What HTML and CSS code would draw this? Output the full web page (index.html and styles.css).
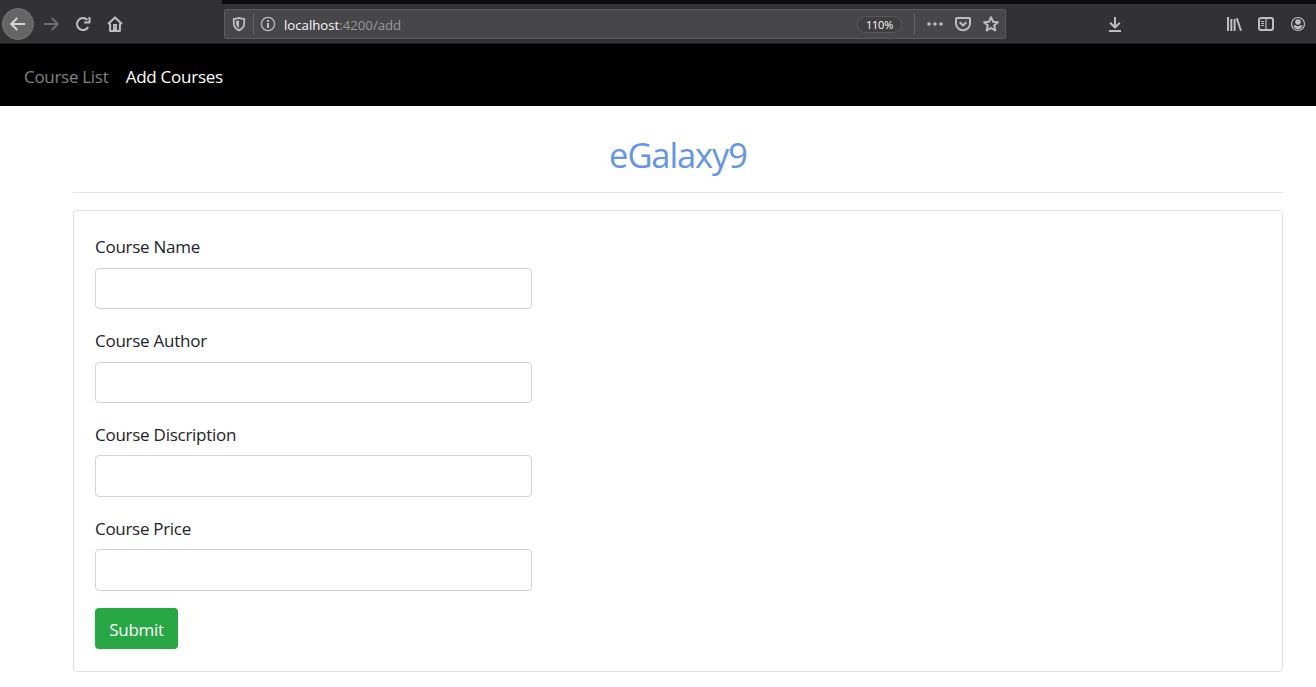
FILE: index.html
```html
<!DOCTYPE html>
<html lang="en">
<head>
<meta charset="utf-8">
<title>eGalaxy9</title>
<link rel="stylesheet" href="styles.css">
</head>
<body>
<header class="browser">
  <div class="tab-edge"></div>
  <div class="toolbar">
    <div class="nav-buttons">
      <span class="back"><svg class="icon" viewBox="0 0 16 16"><path d="M15 8H1.5M7.2 2L1.2 8l6 6"/></svg></span>
      <svg class="icon forward" viewBox="0 0 16 16"><path d="M1 8h13.5M8.8 2l6 6-6 6"/></svg>
      <svg class="icon reload" viewBox="0 0 16 16"><path d="M12.4 4A6 6 0 1 0 13.2 11"/><path d="M14.5 1v5.500H9"/></svg>
      <svg class="icon home" viewBox="0 0 16 16"><path d="M1 8l7-6.6L15 8M3.1 7.5V15h9.8V7.5"/><path class="solid" d="M6 8h4v7H6z"/><path class="hole" d="M7.6 10.5h.9v1h-.9z"/></svg>
    </div>
    <div class="address">
      <svg class="icon shield" viewBox="0 0 16 16"><path d="M8 1.8c1.8.7 3.3 1 5.2 1.1v4.4c0 3.4-2 5.700-5.200 7-3.200-1.300-5.200-3.600-5.200-7V2.900C4.700 2.800 6.200 2.500 8 1.800z"/><path class="solid" d="M8 4.200v7.700c-1.900-1-2.900-2.600-2.900-4.700V4.900C6.200 4.800 7 4.600 8 4.200z"/></svg>
      <i class="rule"></i>
      <svg class="icon info" viewBox="0 0 16 16"><circle cx="8" cy="8" r="6.600"/><path class="solid" d="M7 7h2v5H7zM7 4h2v2H7z"/></svg>
      <span class="url"><b>localhost</b>:4200/add</span>
      <span class="zoom">110%</span>
      <i class="rule"></i>
      <svg class="icon dots" viewBox="0 0 16 16"><circle class="solid" cx="2" cy="8" r="1.750"/><circle class="solid" cx="8" cy="8" r="1.750"/><circle class="solid" cx="14" cy="8" r="1.750"/></svg>
      <svg class="icon pocket" viewBox="0 0 16 16"><path d="M2 2h12a1 1 0 0 1 1 1v4.500a7 6.700 0 0 1-14 0V3a1 1 0 0 1 1-1zM4.700 6.300L8 9.400l3.300-3.100"/></svg>
      <svg class="icon star" viewBox="0 0 16 16"><path d="M8 1.200l2 4.500 4.900.5-3.700 3.300 1.100 5L8 12l-4.300 2.500 1.100-5L1.100 6.200 6 5.700z"/></svg>
    </div>
    <svg class="icon download" viewBox="0 0 16 16"><path d="M8 1v10.500M3.200 6.700L8 11.500l4.800-4.800M2 15h12"/></svg>
    <div class="tools">
      <svg class="icon library" viewBox="0 0 16 16"><path d="M2 1v14M5.300 3v12M8.600 3v12M10.800 2.300L15 14.700"/></svg>
      <svg class="icon sidebar" viewBox="0 0 16 16"><rect x="1" y="2" width="14" height="12" rx="2"/><path class="thin" d="M8 2v12M3 5.500h3M3 7.500h3M3 9.500h3"/></svg>
      <svg class="icon account" viewBox="0 0 16 16"><circle class="thin" cx="8" cy="8" r="6.500"/><circle class="solid" cx="8" cy="6" r="2.800"/><path class="solid" d="M3.500 9.300h2.100a3.700 3.700 0 0 0 4.800 0h2.100C12 11.800 10.300 13.200 8 13.200s-4-1.400-4.500-3.900z"/></svg>
    </div>
  </div>
</header>
<nav class="navbar">
  <a class="nav-link list">Course List</a>
  <a class="nav-link active">Add Courses</a>
</nav>
<main class="container">
  <h1 class="title">eGalaxy9</h1>
  <hr class="divider">
  <form class="card">
    <div class="group"><label class="label" for="name">Course Name</label><input class="field" id="name" type="text"></div>
    <div class="group"><label class="label" for="author">Course Author</label><input class="field" id="author" type="text"></div>
    <div class="group"><label class="label" for="description">Course Discription</label><input class="field" id="description" type="text"></div>
    <div class="group"><label class="label price" for="price">Course Price</label><input class="field" id="price" type="text"></div>
    <button class="submit" type="button">Submit</button>
  </form>
</main>
</body>
</html>
```
FILE: styles.css
```css
* { box-sizing: border-box; }
body {
  margin: 0;
  height: 687px;
  overflow: hidden;
  background: #fff;
  color: #212529;
  font: 17px/26px "Open Sans", "Noto Sans", sans-serif;
  letter-spacing: -0.26px;
}
.browser { height: 44px; background: #323234; border-bottom: 1px solid #1b1b1c; }
.tab-edge { height: 4px; margin-left: 222px; background: #0c0c0d; }
.toolbar { display: flex; align-items: center; height: 40px; padding: 0 10px 0 2px; }
.icon { width: 16px; height: 16px; flex: none; fill: none; stroke: #bebebf; stroke-width: 2; stroke-linejoin: round; }
.icon .solid { fill: #bebebf; stroke: none; }
.icon .hole { fill: #323234; stroke: none; }
.icon .thin { stroke-width: 1.2; }
.nav-buttons { display: flex; align-items: center; width: 222px; }
.back {
  display: flex; align-items: center; justify-content: center;
  width: 32px; height: 32px;
  border: 1px solid #777778; border-radius: 50%; background: #656566;
}
.back .icon { stroke: #d5d5d5; }
.forward { margin-left: 9px; stroke: #6d6d6e; }
.reload { margin-left: 16px; }
.home { margin-left: 16px; }
.address {
  display: flex; align-items: center;
  width: 782px; height: 30px; padding: 0 6px;
  border: 1px solid #5c5c5e; border-radius: 2px; background: #474749;
}
.rule { width: 1px; height: 22px; background: #606269; }
.shield { margin-right: 6px; stroke-width: 1.8; }
.info { margin: 0 8px 0 6px; stroke-width: 1.3; }
.url { flex: 1; padding-top: 2px; color: #98989a; font-size: 13.2px; line-height: 20px; letter-spacing: 0; }
.url b { color: #f9f9fa; font-weight: 400; }
.zoom {
  width: 45px; height: 17px; margin-right: 12px;
  border: 1px solid #59595b; border-radius: 9px; background: #3f3f41;
  color: #f9f9fa; font-size: 11px; line-height: 15px; text-align: center; letter-spacing: -0.2px;
}
.dots { margin: 0 12px; }
.pocket { margin-right: 12px; }
.download { margin-left: 101px; }
.tools { display: flex; gap: 16px; margin-left: auto; }
.navbar { display: flex; align-items: center; height: 62px; padding: 4px 24px 0; background: #000; }
.nav-link { color: #808080; white-space: nowrap; }
.nav-link.list { width: 101.7px; letter-spacing: -0.3px; }
.nav-link.active { color: #fff; }
.container { width: 1210px; margin-left: 73px; }
.title {
  margin: 0; padding-top: 28px; height: 86px;
  color: #6495ed; font-size: 34.5px; line-height: 42px; font-weight: 400;
  letter-spacing: -1.1px; text-align: center;
}
.divider { margin: 0 0 17px; border: 0; border-top: 1px solid #e5e5e5; }
.card { height: 462px; padding: 23px 21px 0; border: 1px solid #dfdfdf; border-radius: 4px; }
.group { height: 93.72px; }
.label { display: block; height: 34px; padding-top: 0.4px; }
.label.price { padding-top: 0.7px; letter-spacing: -0.3px; }
.field { display: block; width: 437px; height: 41.45px; border: 1px solid #ced4da; border-radius: 4px; background: #fff; }
.submit {
  display: block; width: 83px; height: 41px; margin-top: -1px; padding: 3px 0 0;
  border: 0; border-radius: 4px; background: #28a745; color: #fff;
  font: inherit; letter-spacing: -0.26px; text-align: center;
}
```
